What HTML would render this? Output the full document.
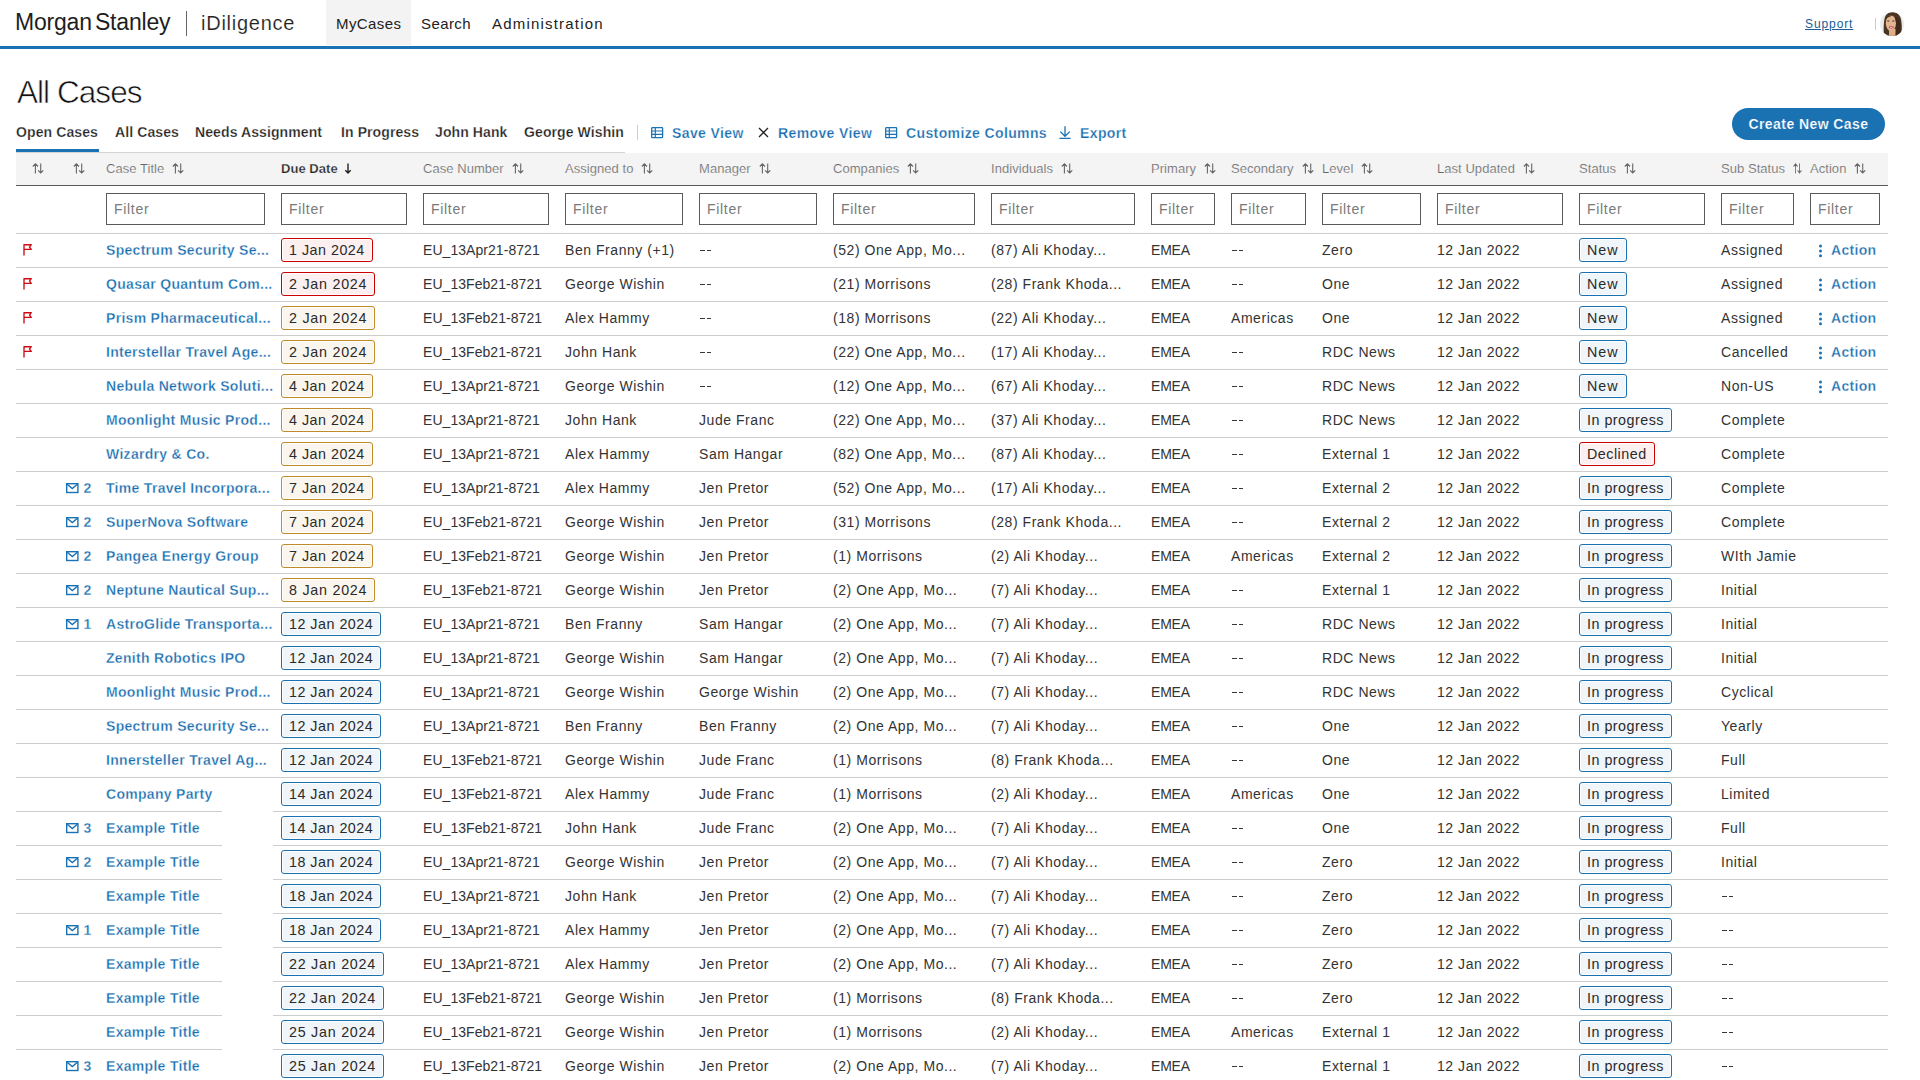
<!DOCTYPE html><html><head><meta charset="utf-8"><title>All Cases</title><style>
*{box-sizing:border-box;margin:0;padding:0}
html,body{width:1920px;height:1080px;overflow:hidden;background:#fff}
body{font-family:"Liberation Sans",sans-serif;color:#333;position:relative}
.a{position:absolute;white-space:nowrap}
#top{position:absolute;left:0;top:0;width:1920px;height:46px;background:#fff}
#topline{position:absolute;left:0;top:46px;width:1920px;height:3px;background:#1b72b3}
.logo{left:15px;top:4.5px;font-size:23px;line-height:34px;color:#1e1e1e;letter-spacing:-0.2px;word-spacing:-3px}
.sep1{left:185.5px;top:11px;width:1.2px;height:25px;background:#666}
.idil{left:201px;top:6px;font-size:20px;line-height:34px;color:#222;letter-spacing:0.75px;-webkit-text-stroke:0.15px #fff}
.navbg{left:326px;top:0;width:85px;height:45px;background:#f3f3f3}
.nav{top:7px;font-size:15px;line-height:34px;color:#222;letter-spacing:0.4px}
.support{left:1805px;top:7px;font-size:12px;line-height:34px;color:#1a5d98;text-decoration:underline;letter-spacing:0.9px}
.sep2{left:1875px;top:18px;width:1px;height:12px;background:#ccc}
.title{left:17px;top:72px;font-size:31.5px;line-height:40px;color:#111;letter-spacing:-0.95px;-webkit-text-stroke:0.6px #fff}
.tab{top:122px;font-size:14px;line-height:20px;font-weight:bold;color:#222;letter-spacing:0.1px;-webkit-text-stroke:0.25px #fff}
.tabul{left:16px;top:149px;width:83px;height:3px;background:#1b72b3;z-index:2}
.tabline{left:16px;top:152px;width:609px;height:1px;background:#d4d4d4}
.sep3{left:637px;top:125px;width:1px;height:15px;background:#ccc}
.tool{top:123px;font-size:14px;line-height:20px;font-weight:bold;color:#176daf;letter-spacing:0.38px;-webkit-text-stroke:0.25px #fff}
.btn{left:1732px;top:108px;width:153px;height:32px;border-radius:16px;background:#1b72b3;color:#fff;font-size:14px;font-weight:bold;line-height:32px;text-align:center;letter-spacing:0.43px;-webkit-text-stroke:0.2px #1b72b3}
#thead{position:absolute;left:16px;top:153px;width:1872px;height:32px;background:#f4f4f4}
#theadline{position:absolute;left:16px;top:185px;width:1872px;height:1px;background:#5a5a5a}
.th{top:159px;font-size:13px;line-height:20px;color:#666;letter-spacing:0.05px;-webkit-text-stroke:0.2px #f4f4f4}
.th b{font-weight:bold;color:#222;-webkit-text-stroke:0.25px #f4f4f4}
.si{vertical-align:-1px;margin-left:8px}
.flt{top:193px;height:32px;border:1.5px solid #5a5a5a;background:#fff;font-size:14px;line-height:31px;padding-left:7px;color:#7a7a7a;letter-spacing:0.7px}
.rl{position:absolute;left:16px;width:1872px;height:1px;background:#cdcdcd}
.td{font-size:14px;line-height:20px;color:#333;letter-spacing:0.55px}
.cn{letter-spacing:0.05px}
.dsh{position:absolute;height:1.5px;width:11.4px;background:linear-gradient(90deg,#383838 0,#383838 4.7px,transparent 4.7px,transparent 6.6px,#383838 6.6px,#383838 11.3px,transparent 11.3px)}
.em{letter-spacing:-0.2px}
.lk{font-weight:bold;color:#176daf;letter-spacing:0.3px;-webkit-text-stroke:0.3px #fff}
.pill{height:24px;border:1.5px solid;border-radius:3px;font-size:14.3px;line-height:23px;padding:0 7px;letter-spacing:0.5px;color:#2a2a2a;box-shadow:inset 0 0 0 1px #fff}
.pr{border-color:#cc0000;background:#fcefef}
.pa{border-color:#c08a26;background:#faf6ee}
.pb{border-color:#1b71b0;background:#f0f5f9}
.st{font-size:14px;line-height:21px;padding:0 7px;letter-spacing:0.3px;color:#222}
.ic svg{display:block}
.mc{font-weight:bold;color:#1b72b3;font-size:14px;line-height:20px;-webkit-text-stroke:0.3px #fff}
</style></head><body>
<div id="top"></div><div id="topline"></div>
<div class="a logo">Morgan Stanley</div><div class="a sep1"></div><div class="a idil">iDiligence</div>
<div class="a navbg"></div><div class="a nav" style="left:336px">MyCases</div><div class="a nav" style="left:421px">Search</div><div class="a nav" style="left:492px;letter-spacing:1.2px">Administration</div>
<div class="a support">Support</div><div class="a sep2"></div>
<svg class="a" style="left:1880px;top:12px" width="24" height="24" viewBox="0 0 24 24"><defs><clipPath id="cc"><circle cx="12" cy="12" r="12"/></clipPath></defs><g clip-path="url(#cc)"><rect width="24" height="24" fill="#e9ecea"/><path d="M3.8 24C3.5 17 3.6 9 5 5 6.5 1.2 10 0 13.5 0.3 18.5 0.8 20.5 4 21.3 9 22 14 22.2 19 20.5 24Z" fill="#4a3424"/><rect x="9" y="17" width="6.5" height="7" fill="#dfae86"/><ellipse cx="10.9" cy="11.2" rx="5.1" ry="8" fill="#e3b490"/><path d="M15.6 24C16.4 18 16.6 10 14.8 5.5 17.5 5.5 19.5 8 20.2 12 20.8 17 20.5 22 19.5 24Z" fill="#3e2a1c"/><path d="M5.6 7.5C6.8 3.5 10 2.5 13.5 3.6 11 4 8 5 5.6 7.5Z" fill="#4a3424"/><rect x="7.2" y="8.5" width="2.2" height="1.1" rx="0.5" fill="#3a2a22"/><rect x="12.2" y="8.5" width="2.2" height="1.1" rx="0.5" fill="#3a2a22"/><ellipse cx="11.3" cy="15.3" rx="2.6" ry="1.3" fill="#c2555c"/><rect x="10" y="14.9" width="2.6" height="0.8" fill="#f3dede"/></g></svg>
<div class="a title">All Cases</div>
<div class="a tab" style="left:16px">Open Cases</div>
<div class="a tab" style="left:115px">All Cases</div>
<div class="a tab" style="left:195px">Needs Assignment</div>
<div class="a tab" style="left:341px">In Progress</div>
<div class="a tab" style="left:435px">John Hank</div>
<div class="a tab" style="left:524px">George Wishin</div>
<div class="a tabul"></div><div class="a tabline"></div><div class="a sep3"></div>
<div class="a ic" style="left:650.5px;top:126.5px"><svg width="13" height="12" viewBox="0 0 13 12"><rect x="0.7" y="0.7" width="10.9" height="9.9" rx="0.5" fill="none" stroke="#1b72b3" stroke-width="1.3"/><path d="M0.7 4H11.6M0.7 7.4H11.6M4.3 0.7V10.6" fill="none" stroke="#1b72b3" stroke-width="1.2"/></svg></div><div class="a tool" style="left:672px">Save View</div>
<div class="a ic" style="left:757.5px;top:127px"><svg width="12" height="12" viewBox="0 0 12 12"><path d="M1 1L10 10M10 1L1 10" stroke="#222" stroke-width="1.3"/></svg></div><div class="a tool" style="left:778px">Remove View</div>
<div class="a ic" style="left:884.5px;top:126.5px"><svg width="13" height="12" viewBox="0 0 13 12"><rect x="0.7" y="0.7" width="10.9" height="9.9" rx="0.5" fill="none" stroke="#1b72b3" stroke-width="1.3"/><path d="M0.7 4H11.6M0.7 7.4H11.6M4.3 0.7V10.6" fill="none" stroke="#1b72b3" stroke-width="1.2"/></svg></div><div class="a tool" style="left:906px">Customize Columns</div>
<div class="a ic" style="left:1059px;top:125.5px"><svg width="13" height="14" viewBox="0 0 13 14"><path d="M6 0.3V10M1.3 5.6L6 10.3l4.7-4.7M0.4 12.4H11.6" fill="none" stroke="#1b72b3" stroke-width="1.3"/></svg></div><div class="a tool" style="left:1080px">Export</div>
<div class="a btn">Create New Case</div>
<div id="thead"></div><div id="theadline"></div>
<div class="a th" style="left:32px;top:163px"><svg class="si" style="margin:0;vertical-align:top" width="12" height="11" viewBox="0 0 12 11"><path d="M3.4 10.5V0.9M0.8 3.5L3.4 0.9 6 3.5M8.7 0.4V10M6.1 7.4L8.7 10 11.3 7.4" fill="none" stroke="#666" stroke-width="1.1"/></svg></div>
<div class="a th" style="left:73px;top:163px"><svg class="si" style="margin:0;vertical-align:top" width="12" height="11" viewBox="0 0 12 11"><path d="M3.4 10.5V0.9M0.8 3.5L3.4 0.9 6 3.5M8.7 0.4V10M6.1 7.4L8.7 10 11.3 7.4" fill="none" stroke="#666" stroke-width="1.1"/></svg></div>
<div class="a th" style="left:106px">Case Title<svg class="si" width="12" height="11" viewBox="0 0 12 11"><path d="M3.4 10.5V0.9M0.8 3.5L3.4 0.9 6 3.5M8.7 0.4V10M6.1 7.4L8.7 10 11.3 7.4" fill="none" stroke="#666" stroke-width="1.1"/></svg></div>
<div class="a th" style="left:281px"><b>Due Date</b><svg class="si" style="margin-left:6px" width="8" height="11" viewBox="0 0 8 11"><path d="M4 0.5V10M1.3 7.3L4 10l2.7-2.7" fill="none" stroke="#222" stroke-width="1.4"/></svg></div>
<div class="a th" style="left:423px">Case Number<svg class="si" width="12" height="11" viewBox="0 0 12 11"><path d="M3.4 10.5V0.9M0.8 3.5L3.4 0.9 6 3.5M8.7 0.4V10M6.1 7.4L8.7 10 11.3 7.4" fill="none" stroke="#666" stroke-width="1.1"/></svg></div>
<div class="a th" style="left:565px">Assigned to<svg class="si" width="12" height="11" viewBox="0 0 12 11"><path d="M3.4 10.5V0.9M0.8 3.5L3.4 0.9 6 3.5M8.7 0.4V10M6.1 7.4L8.7 10 11.3 7.4" fill="none" stroke="#666" stroke-width="1.1"/></svg></div>
<div class="a th" style="left:699px">Manager<svg class="si" width="12" height="11" viewBox="0 0 12 11"><path d="M3.4 10.5V0.9M0.8 3.5L3.4 0.9 6 3.5M8.7 0.4V10M6.1 7.4L8.7 10 11.3 7.4" fill="none" stroke="#666" stroke-width="1.1"/></svg></div>
<div class="a th" style="left:833px">Companies<svg class="si" width="12" height="11" viewBox="0 0 12 11"><path d="M3.4 10.5V0.9M0.8 3.5L3.4 0.9 6 3.5M8.7 0.4V10M6.1 7.4L8.7 10 11.3 7.4" fill="none" stroke="#666" stroke-width="1.1"/></svg></div>
<div class="a th" style="left:991px">Individuals<svg class="si" width="12" height="11" viewBox="0 0 12 11"><path d="M3.4 10.5V0.9M0.8 3.5L3.4 0.9 6 3.5M8.7 0.4V10M6.1 7.4L8.7 10 11.3 7.4" fill="none" stroke="#666" stroke-width="1.1"/></svg></div>
<div class="a th" style="left:1151px">Primary<svg class="si" width="12" height="11" viewBox="0 0 12 11"><path d="M3.4 10.5V0.9M0.8 3.5L3.4 0.9 6 3.5M8.7 0.4V10M6.1 7.4L8.7 10 11.3 7.4" fill="none" stroke="#666" stroke-width="1.1"/></svg></div>
<div class="a th" style="left:1231px">Secondary<svg class="si" width="12" height="11" viewBox="0 0 12 11"><path d="M3.4 10.5V0.9M0.8 3.5L3.4 0.9 6 3.5M8.7 0.4V10M6.1 7.4L8.7 10 11.3 7.4" fill="none" stroke="#666" stroke-width="1.1"/></svg></div>
<div class="a th" style="left:1322px">Level<svg class="si" width="12" height="11" viewBox="0 0 12 11"><path d="M3.4 10.5V0.9M0.8 3.5L3.4 0.9 6 3.5M8.7 0.4V10M6.1 7.4L8.7 10 11.3 7.4" fill="none" stroke="#666" stroke-width="1.1"/></svg></div>
<div class="a th" style="left:1437px">Last Updated<svg class="si" width="12" height="11" viewBox="0 0 12 11"><path d="M3.4 10.5V0.9M0.8 3.5L3.4 0.9 6 3.5M8.7 0.4V10M6.1 7.4L8.7 10 11.3 7.4" fill="none" stroke="#666" stroke-width="1.1"/></svg></div>
<div class="a th" style="left:1579px">Status<svg class="si" width="12" height="11" viewBox="0 0 12 11"><path d="M3.4 10.5V0.9M0.8 3.5L3.4 0.9 6 3.5M8.7 0.4V10M6.1 7.4L8.7 10 11.3 7.4" fill="none" stroke="#666" stroke-width="1.1"/></svg></div>
<div class="a th" style="left:1721px">Sub Status<svg class="si" width="9" preserveAspectRatio="none" height="11" viewBox="0 0 12 11"><path d="M3.4 10.5V0.9M0.8 3.5L3.4 0.9 6 3.5M8.7 0.4V10M6.1 7.4L8.7 10 11.3 7.4" fill="none" stroke="#666" stroke-width="1.1"/></svg></div>
<div class="a th" style="left:1810px">Action<svg class="si" width="12" height="11" viewBox="0 0 12 11"><path d="M3.4 10.5V0.9M0.8 3.5L3.4 0.9 6 3.5M8.7 0.4V10M6.1 7.4L8.7 10 11.3 7.4" fill="none" stroke="#666" stroke-width="1.1"/></svg></div>
<div class="a flt" style="left:106px;width:159px">Filter</div>
<div class="a flt" style="left:281px;width:126px">Filter</div>
<div class="a flt" style="left:423px;width:126px">Filter</div>
<div class="a flt" style="left:565px;width:118px">Filter</div>
<div class="a flt" style="left:699px;width:118px">Filter</div>
<div class="a flt" style="left:833px;width:142px">Filter</div>
<div class="a flt" style="left:991px;width:144px">Filter</div>
<div class="a flt" style="left:1151px;width:64px">Filter</div>
<div class="a flt" style="left:1231px;width:75px">Filter</div>
<div class="a flt" style="left:1322px;width:99px">Filter</div>
<div class="a flt" style="left:1437px;width:126px">Filter</div>
<div class="a flt" style="left:1579px;width:126px">Filter</div>
<div class="a flt" style="left:1721px;width:73px">Filter</div>
<div class="a flt" style="left:1810px;width:70px">Filter</div>
<div class="rl" style="top:233px"></div>
<div class="a ic" style="left:23px;top:244px"><svg width="10" height="12" viewBox="0 0 10 12"><path d="M1 11.4V0.7H8.3L6.5 3.1 8.3 5.4H1" fill="none" stroke="#cc0a14" stroke-width="1.35" stroke-linejoin="round"/></svg></div>
<div class="a td lk" style="left:106px;top:240px">Spectrum Security Se...</div>
<div class="a pill pr" style="left:281px;top:238px">1 Jan 2024</div>
<div class="a td cn" style="left:423px;top:240px">EU_13Apr21-8721</div>
<div class="a td" style="left:565px;top:240px">Ben Franny (+1)</div>
<div class="dsh" style="left:700px;top:249.6px"></div>
<div class="a td" style="left:833px;top:240px">(52) One App, Mo...</div>
<div class="a td" style="left:991px;top:240px">(87) Ali Khoday...</div>
<div class="a td em" style="left:1151px;top:240px">EMEA</div>
<div class="dsh" style="left:1232px;top:249.6px"></div>
<div class="a td" style="left:1322px;top:240px">Zero</div>
<div class="a td" style="left:1437px;top:240px">12 Jan 2022</div>
<div class="a td" style="left:1721px;top:240px">Assigned</div>
<div class="a pill pb" style="left:1579px;top:238px;letter-spacing:1px">New</div>
<div class="a ic" style="left:1818px;top:244px"><svg width="5" height="14" viewBox="0 0 5 14"><circle cx="2.5" cy="2" r="1.5" fill="#1b72b3"/><circle cx="2.5" cy="6.9" r="1.5" fill="#1b72b3"/><circle cx="2.5" cy="11.7" r="1.5" fill="#1b72b3"/></svg></div><div class="a td lk" style="left:1831px;top:240px">Action</div>
<div class="rl" style="top:267px"></div>
<div class="a ic" style="left:23px;top:278px"><svg width="10" height="12" viewBox="0 0 10 12"><path d="M1 11.4V0.7H8.3L6.5 3.1 8.3 5.4H1" fill="none" stroke="#cc0a14" stroke-width="1.35" stroke-linejoin="round"/></svg></div>
<div class="a td lk" style="left:106px;top:274px">Quasar Quantum Com...</div>
<div class="a pill pr" style="left:281px;top:272px;letter-spacing:0.75px">2 Jan 2024</div>
<div class="a td cn" style="left:423px;top:274px">EU_13Feb21-8721</div>
<div class="a td" style="left:565px;top:274px">George Wishin</div>
<div class="dsh" style="left:700px;top:283.6px"></div>
<div class="a td" style="left:833px;top:274px">(21) Morrisons</div>
<div class="a td" style="left:991px;top:274px">(28) Frank Khoda...</div>
<div class="a td em" style="left:1151px;top:274px">EMEA</div>
<div class="dsh" style="left:1232px;top:283.6px"></div>
<div class="a td" style="left:1322px;top:274px">One</div>
<div class="a td" style="left:1437px;top:274px">12 Jan 2022</div>
<div class="a td" style="left:1721px;top:274px">Assigned</div>
<div class="a pill pb" style="left:1579px;top:272px;letter-spacing:1px">New</div>
<div class="a ic" style="left:1818px;top:278px"><svg width="5" height="14" viewBox="0 0 5 14"><circle cx="2.5" cy="2" r="1.5" fill="#1b72b3"/><circle cx="2.5" cy="6.9" r="1.5" fill="#1b72b3"/><circle cx="2.5" cy="11.7" r="1.5" fill="#1b72b3"/></svg></div><div class="a td lk" style="left:1831px;top:274px">Action</div>
<div class="rl" style="top:301px"></div>
<div class="a ic" style="left:23px;top:312px"><svg width="10" height="12" viewBox="0 0 10 12"><path d="M1 11.4V0.7H8.3L6.5 3.1 8.3 5.4H1" fill="none" stroke="#cc0a14" stroke-width="1.35" stroke-linejoin="round"/></svg></div>
<div class="a td lk" style="left:106px;top:308px">Prism Pharmaceutical...</div>
<div class="a pill pa" style="left:281px;top:306px;letter-spacing:0.75px">2 Jan 2024</div>
<div class="a td cn" style="left:423px;top:308px">EU_13Feb21-8721</div>
<div class="a td" style="left:565px;top:308px">Alex Hammy</div>
<div class="dsh" style="left:700px;top:317.6px"></div>
<div class="a td" style="left:833px;top:308px">(18) Morrisons</div>
<div class="a td" style="left:991px;top:308px">(22) Ali Khoday...</div>
<div class="a td em" style="left:1151px;top:308px">EMEA</div>
<div class="a td" style="left:1231px;top:308px">Americas</div>
<div class="a td" style="left:1322px;top:308px">One</div>
<div class="a td" style="left:1437px;top:308px">12 Jan 2022</div>
<div class="a td" style="left:1721px;top:308px">Assigned</div>
<div class="a pill pb" style="left:1579px;top:306px;letter-spacing:1px">New</div>
<div class="a ic" style="left:1818px;top:312px"><svg width="5" height="14" viewBox="0 0 5 14"><circle cx="2.5" cy="2" r="1.5" fill="#1b72b3"/><circle cx="2.5" cy="6.9" r="1.5" fill="#1b72b3"/><circle cx="2.5" cy="11.7" r="1.5" fill="#1b72b3"/></svg></div><div class="a td lk" style="left:1831px;top:308px">Action</div>
<div class="rl" style="top:335px"></div>
<div class="a ic" style="left:23px;top:346px"><svg width="10" height="12" viewBox="0 0 10 12"><path d="M1 11.4V0.7H8.3L6.5 3.1 8.3 5.4H1" fill="none" stroke="#cc0a14" stroke-width="1.35" stroke-linejoin="round"/></svg></div>
<div class="a td lk" style="left:106px;top:342px">Interstellar Travel Age...</div>
<div class="a pill pa" style="left:281px;top:340px;letter-spacing:0.75px">2 Jan 2024</div>
<div class="a td cn" style="left:423px;top:342px">EU_13Feb21-8721</div>
<div class="a td" style="left:565px;top:342px">John Hank</div>
<div class="dsh" style="left:700px;top:351.6px"></div>
<div class="a td" style="left:833px;top:342px">(22) One App, Mo...</div>
<div class="a td" style="left:991px;top:342px">(17) Ali Khoday...</div>
<div class="a td em" style="left:1151px;top:342px">EMEA</div>
<div class="dsh" style="left:1232px;top:351.6px"></div>
<div class="a td" style="left:1322px;top:342px">RDC News</div>
<div class="a td" style="left:1437px;top:342px">12 Jan 2022</div>
<div class="a td" style="left:1721px;top:342px">Cancelled</div>
<div class="a pill pb" style="left:1579px;top:340px;letter-spacing:1px">New</div>
<div class="a ic" style="left:1818px;top:346px"><svg width="5" height="14" viewBox="0 0 5 14"><circle cx="2.5" cy="2" r="1.5" fill="#1b72b3"/><circle cx="2.5" cy="6.9" r="1.5" fill="#1b72b3"/><circle cx="2.5" cy="11.7" r="1.5" fill="#1b72b3"/></svg></div><div class="a td lk" style="left:1831px;top:342px">Action</div>
<div class="rl" style="top:369px"></div>
<div class="a td lk" style="left:106px;top:376px">Nebula Network Soluti...</div>
<div class="a pill pa" style="left:281px;top:374px">4 Jan 2024</div>
<div class="a td cn" style="left:423px;top:376px">EU_13Apr21-8721</div>
<div class="a td" style="left:565px;top:376px">George Wishin</div>
<div class="dsh" style="left:700px;top:385.6px"></div>
<div class="a td" style="left:833px;top:376px">(12) One App, Mo...</div>
<div class="a td" style="left:991px;top:376px">(67) Ali Khoday...</div>
<div class="a td em" style="left:1151px;top:376px">EMEA</div>
<div class="dsh" style="left:1232px;top:385.6px"></div>
<div class="a td" style="left:1322px;top:376px">RDC News</div>
<div class="a td" style="left:1437px;top:376px">12 Jan 2022</div>
<div class="a td" style="left:1721px;top:376px">Non-US</div>
<div class="a pill pb" style="left:1579px;top:374px;letter-spacing:1px">New</div>
<div class="a ic" style="left:1818px;top:380px"><svg width="5" height="14" viewBox="0 0 5 14"><circle cx="2.5" cy="2" r="1.5" fill="#1b72b3"/><circle cx="2.5" cy="6.9" r="1.5" fill="#1b72b3"/><circle cx="2.5" cy="11.7" r="1.5" fill="#1b72b3"/></svg></div><div class="a td lk" style="left:1831px;top:376px">Action</div>
<div class="rl" style="top:403px"></div>
<div class="a td lk" style="left:106px;top:410px">Moonlight Music Prod...</div>
<div class="a pill pa" style="left:281px;top:408px">4 Jan 2024</div>
<div class="a td cn" style="left:423px;top:410px">EU_13Apr21-8721</div>
<div class="a td" style="left:565px;top:410px">John Hank</div>
<div class="a td" style="left:699px;top:410px">Jude Franc</div>
<div class="a td" style="left:833px;top:410px">(22) One App, Mo...</div>
<div class="a td" style="left:991px;top:410px">(37) Ali Khoday...</div>
<div class="a td em" style="left:1151px;top:410px">EMEA</div>
<div class="dsh" style="left:1232px;top:419.6px"></div>
<div class="a td" style="left:1322px;top:410px">RDC News</div>
<div class="a td" style="left:1437px;top:410px">12 Jan 2022</div>
<div class="a td" style="left:1721px;top:410px">Complete</div>
<div class="a pill pb" style="left:1579px;top:408px">In progress</div>
<div class="rl" style="top:437px"></div>
<div class="a td lk" style="left:106px;top:444px">Wizardry &amp; Co.</div>
<div class="a pill pa" style="left:281px;top:442px">4 Jan 2024</div>
<div class="a td cn" style="left:423px;top:444px">EU_13Apr21-8721</div>
<div class="a td" style="left:565px;top:444px">Alex Hammy</div>
<div class="a td" style="left:699px;top:444px">Sam Hangar</div>
<div class="a td" style="left:833px;top:444px">(82) One App, Mo...</div>
<div class="a td" style="left:991px;top:444px">(87) Ali Khoday...</div>
<div class="a td em" style="left:1151px;top:444px">EMEA</div>
<div class="dsh" style="left:1232px;top:453.6px"></div>
<div class="a td" style="left:1322px;top:444px">External 1</div>
<div class="a td" style="left:1437px;top:444px">12 Jan 2022</div>
<div class="a td" style="left:1721px;top:444px">Complete</div>
<div class="a pill pr" style="left:1579px;top:442px">Declined</div>
<div class="rl" style="top:471px"></div>
<div class="a ic" style="left:66px;top:483px"><svg width="13" height="11" viewBox="0 0 13 11"><rect x="0.7" y="0.7" width="11.2" height="8.8" fill="none" stroke="#1b72b3" stroke-width="1.4"/><path d="M0.9 1L6.3 5.6 11.7 1" fill="none" stroke="#1b72b3" stroke-width="1.4"/></svg></div><div class="a mc" style="left:83.5px;top:478px">2</div>
<div class="a td lk" style="left:106px;top:478px">Time Travel Incorpora...</div>
<div class="a pill pa" style="left:281px;top:476px">7 Jan 2024</div>
<div class="a td cn" style="left:423px;top:478px">EU_13Apr21-8721</div>
<div class="a td" style="left:565px;top:478px">Alex Hammy</div>
<div class="a td" style="left:699px;top:478px">Jen Pretor</div>
<div class="a td" style="left:833px;top:478px">(52) One App, Mo...</div>
<div class="a td" style="left:991px;top:478px">(17) Ali Khoday...</div>
<div class="a td em" style="left:1151px;top:478px">EMEA</div>
<div class="dsh" style="left:1232px;top:487.6px"></div>
<div class="a td" style="left:1322px;top:478px">External 2</div>
<div class="a td" style="left:1437px;top:478px">12 Jan 2022</div>
<div class="a td" style="left:1721px;top:478px">Complete</div>
<div class="a pill pb" style="left:1579px;top:476px">In progress</div>
<div class="rl" style="top:505px"></div>
<div class="a ic" style="left:66px;top:517px"><svg width="13" height="11" viewBox="0 0 13 11"><rect x="0.7" y="0.7" width="11.2" height="8.8" fill="none" stroke="#1b72b3" stroke-width="1.4"/><path d="M0.9 1L6.3 5.6 11.7 1" fill="none" stroke="#1b72b3" stroke-width="1.4"/></svg></div><div class="a mc" style="left:83.5px;top:512px">2</div>
<div class="a td lk" style="left:106px;top:512px">SuperNova Software</div>
<div class="a pill pa" style="left:281px;top:510px">7 Jan 2024</div>
<div class="a td cn" style="left:423px;top:512px">EU_13Feb21-8721</div>
<div class="a td" style="left:565px;top:512px">George Wishin</div>
<div class="a td" style="left:699px;top:512px">Jen Pretor</div>
<div class="a td" style="left:833px;top:512px">(31) Morrisons</div>
<div class="a td" style="left:991px;top:512px">(28) Frank Khoda...</div>
<div class="a td em" style="left:1151px;top:512px">EMEA</div>
<div class="dsh" style="left:1232px;top:521.6px"></div>
<div class="a td" style="left:1322px;top:512px">External 2</div>
<div class="a td" style="left:1437px;top:512px">12 Jan 2022</div>
<div class="a td" style="left:1721px;top:512px">Complete</div>
<div class="a pill pb" style="left:1579px;top:510px">In progress</div>
<div class="rl" style="top:539px"></div>
<div class="a ic" style="left:66px;top:551px"><svg width="13" height="11" viewBox="0 0 13 11"><rect x="0.7" y="0.7" width="11.2" height="8.8" fill="none" stroke="#1b72b3" stroke-width="1.4"/><path d="M0.9 1L6.3 5.6 11.7 1" fill="none" stroke="#1b72b3" stroke-width="1.4"/></svg></div><div class="a mc" style="left:83.5px;top:546px">2</div>
<div class="a td lk" style="left:106px;top:546px">Pangea Energy Group</div>
<div class="a pill pa" style="left:281px;top:544px">7 Jan 2024</div>
<div class="a td cn" style="left:423px;top:546px">EU_13Feb21-8721</div>
<div class="a td" style="left:565px;top:546px">George Wishin</div>
<div class="a td" style="left:699px;top:546px">Jen Pretor</div>
<div class="a td" style="left:833px;top:546px">(1) Morrisons</div>
<div class="a td" style="left:991px;top:546px">(2) Ali Khoday...</div>
<div class="a td em" style="left:1151px;top:546px">EMEA</div>
<div class="a td" style="left:1231px;top:546px">Americas</div>
<div class="a td" style="left:1322px;top:546px">External 2</div>
<div class="a td" style="left:1437px;top:546px">12 Jan 2022</div>
<div class="a td" style="left:1721px;top:546px">WIth Jamie</div>
<div class="a pill pb" style="left:1579px;top:544px">In progress</div>
<div class="rl" style="top:573px"></div>
<div class="a ic" style="left:66px;top:585px"><svg width="13" height="11" viewBox="0 0 13 11"><rect x="0.7" y="0.7" width="11.2" height="8.8" fill="none" stroke="#1b72b3" stroke-width="1.4"/><path d="M0.9 1L6.3 5.6 11.7 1" fill="none" stroke="#1b72b3" stroke-width="1.4"/></svg></div><div class="a mc" style="left:83.5px;top:580px">2</div>
<div class="a td lk" style="left:106px;top:580px">Neptune Nautical Sup...</div>
<div class="a pill pa" style="left:281px;top:578px;letter-spacing:0.75px">8 Jan 2024</div>
<div class="a td cn" style="left:423px;top:580px">EU_13Feb21-8721</div>
<div class="a td" style="left:565px;top:580px">George Wishin</div>
<div class="a td" style="left:699px;top:580px">Jen Pretor</div>
<div class="a td" style="left:833px;top:580px">(2) One App, Mo...</div>
<div class="a td" style="left:991px;top:580px">(7) Ali Khoday...</div>
<div class="a td em" style="left:1151px;top:580px">EMEA</div>
<div class="dsh" style="left:1232px;top:589.6px"></div>
<div class="a td" style="left:1322px;top:580px">External 1</div>
<div class="a td" style="left:1437px;top:580px">12 Jan 2022</div>
<div class="a td" style="left:1721px;top:580px">Initial</div>
<div class="a pill pb" style="left:1579px;top:578px">In progress</div>
<div class="rl" style="top:607px"></div>
<div class="a ic" style="left:66px;top:619px"><svg width="13" height="11" viewBox="0 0 13 11"><rect x="0.7" y="0.7" width="11.2" height="8.8" fill="none" stroke="#1b72b3" stroke-width="1.4"/><path d="M0.9 1L6.3 5.6 11.7 1" fill="none" stroke="#1b72b3" stroke-width="1.4"/></svg></div><div class="a mc" style="left:83.5px;top:614px">1</div>
<div class="a td lk" style="left:106px;top:614px">AstroGlide Transporta...</div>
<div class="a pill pb" style="left:281px;top:612px">12 Jan 2024</div>
<div class="a td cn" style="left:423px;top:614px">EU_13Apr21-8721</div>
<div class="a td" style="left:565px;top:614px">Ben Franny</div>
<div class="a td" style="left:699px;top:614px">Sam Hangar</div>
<div class="a td" style="left:833px;top:614px">(2) One App, Mo...</div>
<div class="a td" style="left:991px;top:614px">(7) Ali Khoday...</div>
<div class="a td em" style="left:1151px;top:614px">EMEA</div>
<div class="dsh" style="left:1232px;top:623.6px"></div>
<div class="a td" style="left:1322px;top:614px">RDC News</div>
<div class="a td" style="left:1437px;top:614px">12 Jan 2022</div>
<div class="a td" style="left:1721px;top:614px">Initial</div>
<div class="a pill pb" style="left:1579px;top:612px">In progress</div>
<div class="rl" style="top:641px"></div>
<div class="a td lk" style="left:106px;top:648px">Zenith Robotics IPO</div>
<div class="a pill pb" style="left:281px;top:646px">12 Jan 2024</div>
<div class="a td cn" style="left:423px;top:648px">EU_13Apr21-8721</div>
<div class="a td" style="left:565px;top:648px">George Wishin</div>
<div class="a td" style="left:699px;top:648px">Sam Hangar</div>
<div class="a td" style="left:833px;top:648px">(2) One App, Mo...</div>
<div class="a td" style="left:991px;top:648px">(7) Ali Khoday...</div>
<div class="a td em" style="left:1151px;top:648px">EMEA</div>
<div class="dsh" style="left:1232px;top:657.6px"></div>
<div class="a td" style="left:1322px;top:648px">RDC News</div>
<div class="a td" style="left:1437px;top:648px">12 Jan 2022</div>
<div class="a td" style="left:1721px;top:648px">Initial</div>
<div class="a pill pb" style="left:1579px;top:646px">In progress</div>
<div class="rl" style="top:675px"></div>
<div class="a td lk" style="left:106px;top:682px">Moonlight Music Prod...</div>
<div class="a pill pb" style="left:281px;top:680px">12 Jan 2024</div>
<div class="a td cn" style="left:423px;top:682px">EU_13Apr21-8721</div>
<div class="a td" style="left:565px;top:682px">George Wishin</div>
<div class="a td" style="left:699px;top:682px">George Wishin</div>
<div class="a td" style="left:833px;top:682px">(2) One App, Mo...</div>
<div class="a td" style="left:991px;top:682px">(7) Ali Khoday...</div>
<div class="a td em" style="left:1151px;top:682px">EMEA</div>
<div class="dsh" style="left:1232px;top:691.6px"></div>
<div class="a td" style="left:1322px;top:682px">RDC News</div>
<div class="a td" style="left:1437px;top:682px">12 Jan 2022</div>
<div class="a td" style="left:1721px;top:682px">Cyclical</div>
<div class="a pill pb" style="left:1579px;top:680px">In progress</div>
<div class="rl" style="top:709px"></div>
<div class="a td lk" style="left:106px;top:716px">Spectrum Security Se...</div>
<div class="a pill pb" style="left:281px;top:714px">12 Jan 2024</div>
<div class="a td cn" style="left:423px;top:716px">EU_13Apr21-8721</div>
<div class="a td" style="left:565px;top:716px">Ben Franny</div>
<div class="a td" style="left:699px;top:716px">Ben Franny</div>
<div class="a td" style="left:833px;top:716px">(2) One App, Mo...</div>
<div class="a td" style="left:991px;top:716px">(7) Ali Khoday...</div>
<div class="a td em" style="left:1151px;top:716px">EMEA</div>
<div class="dsh" style="left:1232px;top:725.6px"></div>
<div class="a td" style="left:1322px;top:716px">One</div>
<div class="a td" style="left:1437px;top:716px">12 Jan 2022</div>
<div class="a td" style="left:1721px;top:716px">Yearly</div>
<div class="a pill pb" style="left:1579px;top:714px">In progress</div>
<div class="rl" style="top:743px"></div>
<div class="a td lk" style="left:106px;top:750px">Innersteller Travel Ag...</div>
<div class="a pill pb" style="left:281px;top:748px">12 Jan 2024</div>
<div class="a td cn" style="left:423px;top:750px">EU_13Feb21-8721</div>
<div class="a td" style="left:565px;top:750px">George Wishin</div>
<div class="a td" style="left:699px;top:750px">Jude Franc</div>
<div class="a td" style="left:833px;top:750px">(1) Morrisons</div>
<div class="a td" style="left:991px;top:750px">(8) Frank Khoda...</div>
<div class="a td em" style="left:1151px;top:750px">EMEA</div>
<div class="dsh" style="left:1232px;top:759.6px"></div>
<div class="a td" style="left:1322px;top:750px">One</div>
<div class="a td" style="left:1437px;top:750px">12 Jan 2022</div>
<div class="a td" style="left:1721px;top:750px">Full</div>
<div class="a pill pb" style="left:1579px;top:748px">In progress</div>
<div class="rl" style="top:777px"></div>
<div class="a td lk" style="left:106px;top:784px">Company Party</div>
<div class="a pill pb" style="left:281px;top:782px">14 Jan 2024</div>
<div class="a td cn" style="left:423px;top:784px">EU_13Feb21-8721</div>
<div class="a td" style="left:565px;top:784px">Alex Hammy</div>
<div class="a td" style="left:699px;top:784px">Jude Franc</div>
<div class="a td" style="left:833px;top:784px">(1) Morrisons</div>
<div class="a td" style="left:991px;top:784px">(2) Ali Khoday...</div>
<div class="a td em" style="left:1151px;top:784px">EMEA</div>
<div class="a td" style="left:1231px;top:784px">Americas</div>
<div class="a td" style="left:1322px;top:784px">One</div>
<div class="a td" style="left:1437px;top:784px">12 Jan 2022</div>
<div class="a td" style="left:1721px;top:784px">Limited</div>
<div class="a pill pb" style="left:1579px;top:782px">In progress</div>
<div class="rl" style="top:811px;width:206px"></div><div class="rl" style="top:811px;left:273px;width:1615px"></div>
<div class="a ic" style="left:66px;top:823px"><svg width="13" height="11" viewBox="0 0 13 11"><rect x="0.7" y="0.7" width="11.2" height="8.8" fill="none" stroke="#1b72b3" stroke-width="1.4"/><path d="M0.9 1L6.3 5.6 11.7 1" fill="none" stroke="#1b72b3" stroke-width="1.4"/></svg></div><div class="a mc" style="left:83.5px;top:818px">3</div>
<div class="a td lk" style="left:106px;top:818px">Example Title</div>
<div class="a pill pb" style="left:281px;top:816px">14 Jan 2024</div>
<div class="a td cn" style="left:423px;top:818px">EU_13Feb21-8721</div>
<div class="a td" style="left:565px;top:818px">John Hank</div>
<div class="a td" style="left:699px;top:818px">Jude Franc</div>
<div class="a td" style="left:833px;top:818px">(2) One App, Mo...</div>
<div class="a td" style="left:991px;top:818px">(7) Ali Khoday...</div>
<div class="a td em" style="left:1151px;top:818px">EMEA</div>
<div class="dsh" style="left:1232px;top:827.6px"></div>
<div class="a td" style="left:1322px;top:818px">One</div>
<div class="a td" style="left:1437px;top:818px">12 Jan 2022</div>
<div class="a td" style="left:1721px;top:818px">Full</div>
<div class="a pill pb" style="left:1579px;top:816px">In progress</div>
<div class="rl" style="top:845px;width:206px"></div><div class="rl" style="top:845px;left:273px;width:1615px"></div>
<div class="a ic" style="left:66px;top:857px"><svg width="13" height="11" viewBox="0 0 13 11"><rect x="0.7" y="0.7" width="11.2" height="8.8" fill="none" stroke="#1b72b3" stroke-width="1.4"/><path d="M0.9 1L6.3 5.6 11.7 1" fill="none" stroke="#1b72b3" stroke-width="1.4"/></svg></div><div class="a mc" style="left:83.5px;top:852px">2</div>
<div class="a td lk" style="left:106px;top:852px">Example Title</div>
<div class="a pill pb" style="left:281px;top:850px">18 Jan 2024</div>
<div class="a td cn" style="left:423px;top:852px">EU_13Apr21-8721</div>
<div class="a td" style="left:565px;top:852px">George Wishin</div>
<div class="a td" style="left:699px;top:852px">Jen Pretor</div>
<div class="a td" style="left:833px;top:852px">(2) One App, Mo...</div>
<div class="a td" style="left:991px;top:852px">(7) Ali Khoday...</div>
<div class="a td em" style="left:1151px;top:852px">EMEA</div>
<div class="dsh" style="left:1232px;top:861.6px"></div>
<div class="a td" style="left:1322px;top:852px">Zero</div>
<div class="a td" style="left:1437px;top:852px">12 Jan 2022</div>
<div class="a td" style="left:1721px;top:852px">Initial</div>
<div class="a pill pb" style="left:1579px;top:850px">In progress</div>
<div class="rl" style="top:879px;width:206px"></div><div class="rl" style="top:879px;left:273px;width:1615px"></div>
<div class="a td lk" style="left:106px;top:886px">Example Title</div>
<div class="a pill pb" style="left:281px;top:884px">18 Jan 2024</div>
<div class="a td cn" style="left:423px;top:886px">EU_13Apr21-8721</div>
<div class="a td" style="left:565px;top:886px">John Hank</div>
<div class="a td" style="left:699px;top:886px">Jen Pretor</div>
<div class="a td" style="left:833px;top:886px">(2) One App, Mo...</div>
<div class="a td" style="left:991px;top:886px">(7) Ali Khoday...</div>
<div class="a td em" style="left:1151px;top:886px">EMEA</div>
<div class="dsh" style="left:1232px;top:895.6px"></div>
<div class="a td" style="left:1322px;top:886px">Zero</div>
<div class="a td" style="left:1437px;top:886px">12 Jan 2022</div>
<div class="dsh" style="left:1722px;top:895.6px"></div>
<div class="a pill pb" style="left:1579px;top:884px">In progress</div>
<div class="rl" style="top:913px;width:206px"></div><div class="rl" style="top:913px;left:273px;width:1615px"></div>
<div class="a ic" style="left:66px;top:925px"><svg width="13" height="11" viewBox="0 0 13 11"><rect x="0.7" y="0.7" width="11.2" height="8.8" fill="none" stroke="#1b72b3" stroke-width="1.4"/><path d="M0.9 1L6.3 5.6 11.7 1" fill="none" stroke="#1b72b3" stroke-width="1.4"/></svg></div><div class="a mc" style="left:83.5px;top:920px">1</div>
<div class="a td lk" style="left:106px;top:920px">Example Title</div>
<div class="a pill pb" style="left:281px;top:918px">18 Jan 2024</div>
<div class="a td cn" style="left:423px;top:920px">EU_13Apr21-8721</div>
<div class="a td" style="left:565px;top:920px">Alex Hammy</div>
<div class="a td" style="left:699px;top:920px">Jen Pretor</div>
<div class="a td" style="left:833px;top:920px">(2) One App, Mo...</div>
<div class="a td" style="left:991px;top:920px">(7) Ali Khoday...</div>
<div class="a td em" style="left:1151px;top:920px">EMEA</div>
<div class="dsh" style="left:1232px;top:929.6px"></div>
<div class="a td" style="left:1322px;top:920px">Zero</div>
<div class="a td" style="left:1437px;top:920px">12 Jan 2022</div>
<div class="dsh" style="left:1722px;top:929.6px"></div>
<div class="a pill pb" style="left:1579px;top:918px">In progress</div>
<div class="rl" style="top:947px;width:206px"></div><div class="rl" style="top:947px;left:273px;width:1615px"></div>
<div class="a td lk" style="left:106px;top:954px">Example Title</div>
<div class="a pill pb" style="left:281px;top:952px;letter-spacing:0.75px">22 Jan 2024</div>
<div class="a td cn" style="left:423px;top:954px">EU_13Apr21-8721</div>
<div class="a td" style="left:565px;top:954px">Alex Hammy</div>
<div class="a td" style="left:699px;top:954px">Jen Pretor</div>
<div class="a td" style="left:833px;top:954px">(2) One App, Mo...</div>
<div class="a td" style="left:991px;top:954px">(7) Ali Khoday...</div>
<div class="a td em" style="left:1151px;top:954px">EMEA</div>
<div class="dsh" style="left:1232px;top:963.6px"></div>
<div class="a td" style="left:1322px;top:954px">Zero</div>
<div class="a td" style="left:1437px;top:954px">12 Jan 2022</div>
<div class="dsh" style="left:1722px;top:963.6px"></div>
<div class="a pill pb" style="left:1579px;top:952px">In progress</div>
<div class="rl" style="top:981px;width:206px"></div><div class="rl" style="top:981px;left:273px;width:1615px"></div>
<div class="a td lk" style="left:106px;top:988px">Example Title</div>
<div class="a pill pb" style="left:281px;top:986px;letter-spacing:0.75px">22 Jan 2024</div>
<div class="a td cn" style="left:423px;top:988px">EU_13Feb21-8721</div>
<div class="a td" style="left:565px;top:988px">George Wishin</div>
<div class="a td" style="left:699px;top:988px">Jen Pretor</div>
<div class="a td" style="left:833px;top:988px">(1) Morrisons</div>
<div class="a td" style="left:991px;top:988px">(8) Frank Khoda...</div>
<div class="a td em" style="left:1151px;top:988px">EMEA</div>
<div class="dsh" style="left:1232px;top:997.6px"></div>
<div class="a td" style="left:1322px;top:988px">Zero</div>
<div class="a td" style="left:1437px;top:988px">12 Jan 2022</div>
<div class="dsh" style="left:1722px;top:997.6px"></div>
<div class="a pill pb" style="left:1579px;top:986px">In progress</div>
<div class="rl" style="top:1015px;width:206px"></div><div class="rl" style="top:1015px;left:273px;width:1615px"></div>
<div class="a td lk" style="left:106px;top:1022px">Example Title</div>
<div class="a pill pb" style="left:281px;top:1020px;letter-spacing:0.75px">25 Jan 2024</div>
<div class="a td cn" style="left:423px;top:1022px">EU_13Feb21-8721</div>
<div class="a td" style="left:565px;top:1022px">George Wishin</div>
<div class="a td" style="left:699px;top:1022px">Jen Pretor</div>
<div class="a td" style="left:833px;top:1022px">(1) Morrisons</div>
<div class="a td" style="left:991px;top:1022px">(2) Ali Khoday...</div>
<div class="a td em" style="left:1151px;top:1022px">EMEA</div>
<div class="a td" style="left:1231px;top:1022px">Americas</div>
<div class="a td" style="left:1322px;top:1022px">External 1</div>
<div class="a td" style="left:1437px;top:1022px">12 Jan 2022</div>
<div class="dsh" style="left:1722px;top:1031.6px"></div>
<div class="a pill pb" style="left:1579px;top:1020px">In progress</div>
<div class="rl" style="top:1049px;width:206px"></div><div class="rl" style="top:1049px;left:273px;width:1615px"></div>
<div class="a ic" style="left:66px;top:1061px"><svg width="13" height="11" viewBox="0 0 13 11"><rect x="0.7" y="0.7" width="11.2" height="8.8" fill="none" stroke="#1b72b3" stroke-width="1.4"/><path d="M0.9 1L6.3 5.6 11.7 1" fill="none" stroke="#1b72b3" stroke-width="1.4"/></svg></div><div class="a mc" style="left:83.5px;top:1056px">3</div>
<div class="a td lk" style="left:106px;top:1056px">Example Title</div>
<div class="a pill pb" style="left:281px;top:1054px;letter-spacing:0.75px">25 Jan 2024</div>
<div class="a td cn" style="left:423px;top:1056px">EU_13Feb21-8721</div>
<div class="a td" style="left:565px;top:1056px">George Wishin</div>
<div class="a td" style="left:699px;top:1056px">Jen Pretor</div>
<div class="a td" style="left:833px;top:1056px">(2) One App, Mo...</div>
<div class="a td" style="left:991px;top:1056px">(7) Ali Khoday...</div>
<div class="a td em" style="left:1151px;top:1056px">EMEA</div>
<div class="dsh" style="left:1232px;top:1065.6px"></div>
<div class="a td" style="left:1322px;top:1056px">External 1</div>
<div class="a td" style="left:1437px;top:1056px">12 Jan 2022</div>
<div class="dsh" style="left:1722px;top:1065.6px"></div>
<div class="a pill pb" style="left:1579px;top:1054px">In progress</div>
</body></html>
